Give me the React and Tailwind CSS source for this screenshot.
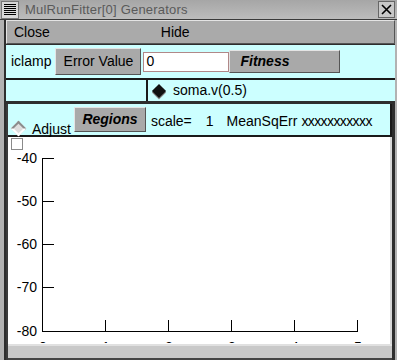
import React from 'react';

const bevel = 'border border-t-[#e4e4e4] border-l-[#e4e4e4] border-r-[#555] border-b-[#555]';

const Graph = () => {
    const xs = [34, 97, 160, 223, 286, 349];
    const ys = [21, 64, 107, 150, 194];
    const yl = ['-40', '-50', '-60', '-70', '-80'];
    return (
        <svg width="382" height="206" className="block" style={{ fontFamily: 'Liberation Sans, Arial, sans-serif' }}>
            <rect x="3.5" y="1.5" width="11" height="11" fill="#fff" stroke="#8a8a8a" />
            <line x1="34.5" y1="21" x2="34.5" y2="194.5" stroke="#000" />
            <line x1="34" y1="194.5" x2="350" y2="194.5" stroke="#000" />
            {ys.map((y, i) => (
                <g key={y}>
                    <line x1="34" y1={y + 0.5} x2="46" y2={y + 0.5} stroke="#000" />
                    <text x="29" y={y + 5} fontSize="14" textAnchor="end">{yl[i]}</text>
                </g>
            ))}
            {xs.map((x, i) => (
                <g key={x}>
                    <line x1={x + 0.5} y1="183" x2={x + 0.5} y2="195" stroke="#000" />
                    <text x={x + 1} y="215" fontSize="14" textAnchor="middle">{i}</text>
                </g>
            ))}
        </svg>
    );
};

const App = () => {
    return (
        <div className="w-[397px] h-[360px] bg-[#b2b2b2] flex flex-col overflow-hidden font-['Liberation_Sans',Arial,sans-serif] text-black">
            {/* Title bar */}
            <div className="h-[20px] flex items-center bg-gradient-to-b from-[#a6a6a6] to-[#bcbcbc] border-b border-[#3a3a3a]">
                <div className="w-[18px] h-[18px] ml-[1px] bg-[#d8d8d8] border border-[#777] flex flex-col justify-center gap-[1px] px-[2px]">
                    {[0, 1, 2, 3, 4, 5].map((i) => (
                        <div key={i} className="h-[1px] bg-black" />
                    ))}
                </div>
                <span className="ml-[6px] text-[13px] text-[#5a5a5a] tracking-[0.2px]">MulRunFitter[0] Generators</span>
                <div className="ml-auto mr-[2px] w-[17px] h-[17px] bg-[#c8c8c8] border border-[#666] flex items-center justify-center">
                    <svg width="11" height="11" viewBox="0 0 11 11">
                        <path d="M1 1 L10 10 M10 1 L1 10" stroke="#000" strokeWidth="1.6" />
                    </svg>
                </div>
            </div>

            {/* Window body */}
            <div className="flex-1 flex pl-[4px] pr-[4px]">
                <div className="flex-1 flex flex-col border-l-2 border-[#2e2e2e] bg-[#2e2e2e]">
                    {/* Menu bar */}
                    <div className={`h-[24px] flex items-center bg-[#aaaaaa] ${bevel} text-[14px]`}>
                        <span className="ml-[7px]">Close</span>
                        <span className="ml-[111px]">Hide</span>
                    </div>

                    {/* Row 1 */}
                    <div className="h-[35px] mt-[1px] flex items-center bg-[#ccffff] border-b-2 border-[#1a1a1a] text-[14px]">
                        <span className="ml-[5px]">iclamp</span>
                        <div className={`ml-[4px] w-[86px] h-[27px] flex items-center justify-center bg-[#a9a9a9] ${bevel}`}>Error Value</div>
                        <div className="ml-[2px] w-[86px] h-[20px] flex items-center bg-white border border-[#b08888] pl-[2px]">0</div>
                        <div className={`w-[111px] h-[23px] flex items-center pl-[10px] bg-[#a9a9a9] ${bevel} font-bold italic`}>Fitness</div>
                    </div>

                    {/* Row 2 */}
                    <div className="h-[21px] flex bg-[#ccffff] text-[14px]">
                        <div className="w-[142px] border-r-2 border-[#1a1a1a]" />
                        <div className="flex items-center">
                            <div className="ml-[6px] w-[10px] h-[10px] rotate-45 bg-[#111] shadow-[1px_1px_0_#888]" />
                            <span className="ml-[9px]">soma.v(0.5)</span>
                        </div>
                    </div>

                    {/* Row 3 + graph */}
                    <div className="flex-1 flex flex-col mt-[3px] mr-[3px] border-l-2 border-[#3a3a3a] bg-[#ccffff]">
                        <div className="h-[33px] flex items-start bg-[#ccffff] border-b-2 border-r-2 border-[#1a1a1a] text-[14px] relative">
                            <div className="mt-[19px] ml-[5px] w-[11px] h-[11px] rotate-45 bg-[#dedede] border-2 border-t-[#8c8c8c] border-l-[#8c8c8c] border-r-[#ffffff] border-b-[#ffffff]" />
                            <span className="mt-[15px] ml-[8px]">Adjust</span>
                            <div className={`absolute left-[66px] top-[3px] w-[72px] h-[25px] flex items-center justify-center bg-[#a9a9a9] ${bevel} font-bold italic`}>Regions</div>
                            <span className="ml-[80px] mt-[7px]">scale=</span>
                            <span className="ml-[14px] mt-[7px]">1</span>
                            <span className="ml-[13px] mt-[7px]">MeanSqErr</span>
                            <span className="ml-[4px] mt-[7px] tracking-[-0.6px]">xxxxxxxxxxx</span>
                        </div>
                        <div className="h-[207px] bg-white overflow-hidden border-r-2 border-[#d8d8d8]">
                            <Graph />
                        </div>
                        <div className="flex-1 bg-[#c8c8c8] border-t-2 border-[#e0e0e0] border-b-2 border-b-[#444]" />
                    </div>
                </div>
            </div>
        </div>
    );
};

export default App;
